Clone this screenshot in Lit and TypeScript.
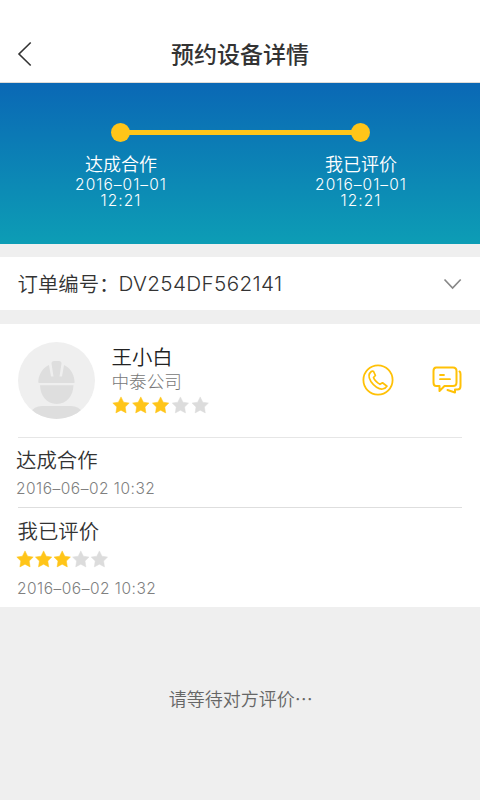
import { LitElement, html, css, svg } from "lit";
import { customElement, property } from "lit/decorators.js";

@customElement("star-rating")
class StarRating extends LitElement {
  @property({ type: Number }) value = 0;
  @property({ type: Number }) step = 20;
  static styles = css`
    :host { display: block; height: 18px; }
    svg { display: block; overflow: visible; }
    .on { fill: #ffc519; stroke: #ffc519; }
    .off { fill: #dcdcdc; stroke: #dcdcdc; }
    path { stroke-width: .5; stroke-linejoin: round; }
  `;
  render() {
    return html`<svg width="100" height="18">
      ${[0, 1, 2, 3, 4].map(
        (i) => svg`<path class=${i < this.value ? "on" : "off"}
          transform=${`translate(${i * this.step} 0)`}
          d="M9 .9 11.600 6.200 17.200 7.100 13.200 11 14.100 16.900 9 14.200 3.900 16.900 4.800 11 .8 7.100 6.400 6.200Z"/>`
      )}
    </svg>`;
  }
}

@customElement("app-root")
class AppRoot extends LitElement {
  static styles = css`
    :host {
      display: flex; flex-direction: column; height: 800px; width: 480px;
      background: #efefef; overflow: hidden; color: #333;
      font-family: "Noto Sans CJK SC DemiLight", "Noto Sans CJK SC", sans-serif; font-weight: 350;
    }
    * { box-sizing: border-box; }
    svg { display: block; flex: none; }
    header {
      height: 83px; background: #fff; border-bottom: 1px solid #dedcd8;
      display: grid; grid-template-columns: 60px 1fr 60px; padding-top: 26px;
    }
    header svg { margin: 14px 0 0 16px; }
    h1 { margin: -1px 0 0; font: 500 23px/56px "Noto Sans CJK SC", sans-serif; text-align: center; }
    .progress {
      height: 161px; background: linear-gradient(#0a68b5, #0d9db5); color: #fff;
      padding-top: 39.5px;
    }
    .track { display: flex; align-items: center; margin: 0 110px 0 110.5px; height: 20px; }
    .dot { width: 19.5px; height: 19.5px; flex: none; border-radius: 50%; background: #ffc519; }
    .bar { flex: 1; height: 5px; margin: 0 -2px; background: #ffc519; }
    .steps { display: flex; justify-content: space-between; padding: 0 59px 0 61px; }
    .step { width: 120px; text-align: center; }
    .step b { display: block; font-weight: 300; font-size: 18px; line-height: 26px; margin: 7px 0 1px; }
    .step span { display: block; font: 300 15.5px/16px Inter, sans-serif; letter-spacing: 1.05px; }
    .order {
      height: 53px; margin: 13px 0 14px; background: #fff; padding: 0 18px;
      display: flex; align-items: center; font-size: 20.4px;
    }
    .label { width: 101px; white-space: nowrap; margin: -2px 0 0 -.5px; }
    .number { flex: 1; font: 300 20.700px/24px Inter, sans-serif; letter-spacing: .35px; }
    .card { height: 283px; background: #fff; padding: 0 18px; }
    .person { height: 114px; display: flex; padding-top: 18px; border-bottom: 1px solid #e6e6e6; }
    .info { flex: 1; padding-left: 16.5px; }
    .name { font-size: 20.4px; line-height: 28px; color: #222; }
    .company { font: 300 17.6px/21px "Noto Sans CJK SC", sans-serif; color: #777; }
    .info star-rating { margin: 5px 0 0 0; }
    .phone { margin: 22px 37.5px 0 0; }
    .chat { margin: 22px 0 0; }
    .event { height: 70px; border-bottom: 1px solid #dedede; }
    .event:last-child { border: 0; height: 100px; }
    .title { font-size: 20.4px; line-height: 30px; padding-top: 7px; height: 38px; margin-left: -.5px; }
    .shift.title { padding-top: 6px; }
    .time {
      font: 300 15.5px/20px Inter, sans-serif; letter-spacing: .5px; color: #808080;
      margin-top: 3px; margin-left: -1px;
    }
    .shift { margin-left: -2px; }
    .event star-rating { margin: 4px 0 0 -2px; }
    .event star-rating + .time { margin-top: 11px; }
    .wait { text-align: center; font-size: 18px; line-height: 26px; color: #666; margin: 77.5px 0 0 1.5px; }
  `;

  render() {
    return html`
      <header>
        <svg width="18" height="28" viewBox="0 0 18 28" fill="none" stroke="#333" stroke-width="1.6">
          <path d="M14.7 2.5 3 14 14.7 25.5"/>
        </svg>
        <h1>预约设备详情</h1>
      </header>
      <section class="progress">
        <div class="track"><i class="dot"></i><i class="bar"></i><i class="dot"></i></div>
        <div class="steps">
          ${["达成合作", "我已评价"].map(
            (t) => html`<div class="step"><b>${t}</b><span>2016–01–01</span><span>12:21</span></div>`
          )}
        </div>
      </section>
      <section class="order">
        <span class="label" lang="zh-CN">订单编号：</span>
        <span class="number">DV254DF562141</span>
        <svg width="19" height="12" viewBox="0 0 19 12" fill="none" stroke="#888" stroke-width="1.7">
          <path d="M1.5 1.5 9.6 10 17.7 1.5"/>
        </svg>
      </section>
      <section class="card">
        <div class="person">
          <svg width="77" height="77" viewBox="0 0 77 77">
            <defs><clipPath id="disc"><circle cx="38.5" cy="38.5" r="38.5"/></clipPath></defs>
            <circle cx="38.5" cy="38.5" r="38.5" fill="#efefef"/>
            <g fill="#dedede" clip-path="url(#disc)">
              <path d="M21 41Q20 41 20.300 39C21 31 26 25 31 23L33 34.500H35.500L33.500 21.500Q33.500 19 36 19H41Q43.500 19 43.500 21.500L41.500 34.500H44L46 23C51 25 56 31 56.500 39Q57 41 56 41Z"/>
              <path d="M22 43.300H55.500C55 54 49 62 38.700 62S22.500 54 22 43.300Z"/>
              <path d="M12 77V71Q16 64 24 64H53Q61 64 65 71V77Z"/>
            </g>
          </svg>
          <div class="info">
            <div class="name">王小白</div>
            <div class="company">中泰公司</div>
            <star-rating value="3" step="19.8"></star-rating>
          </div>
          <svg class="phone" width="32" height="32" viewBox="0 0 32 32" fill="none" stroke="#ffc107" stroke-width="1.8" stroke-linejoin="round">
            <circle cx="16" cy="16" r="14.600"/>
            <path stroke-width="1.700" d="M9.300 7.500C6 10 6.400 13.500 8.900 17.500C12 22.200 17 25.500 20.500 25C22.500 24.700 24.200 23.700 25 22.200L20.500 18.800L18 20.300C15.500 19.300 12.300 16 11.500 13.500L13.400 11.500L11.600 7.500Q10.500 6.600 9.300 7.500Z"/>
          </svg>
          <svg class="chat" width="31" height="32" viewBox="0 0 31 32" fill="none" stroke="#ffc107" stroke-width="2" stroke-linecap="round" stroke-linejoin="round">
            <path d="M5.200 3.500H22Q25.500 3.500 25.500 7V18.500Q25.500 22 22 22H13.500L8.500 27V22H5.200Q2.500 22 2.500 18.500V7Q2.500 3.500 5.200 3.500Z"/>
            <path d="M28.500 7.500Q29.500 8 29.500 10V22Q29.500 25.500 26.500 25.500H24V28.500L16.500 26"/>
            <path stroke-width="1.800" d="M9 11H13M9 15.200H19"/>
          </svg>
        </div>
        <div class="event">
          <div class="title shift">达成合作</div>
          <div class="time shift">2016–06–02 10:32</div>
        </div>
        <div class="event">
          <div class="title">我已评价</div>
          <star-rating value="3" step="18.6"></star-rating>
          <div class="time">2016–06–02 10:32</div>
        </div>
      </section>
      <div class="wait">请等待对方评价⋯</div>
    `;
  }
}
